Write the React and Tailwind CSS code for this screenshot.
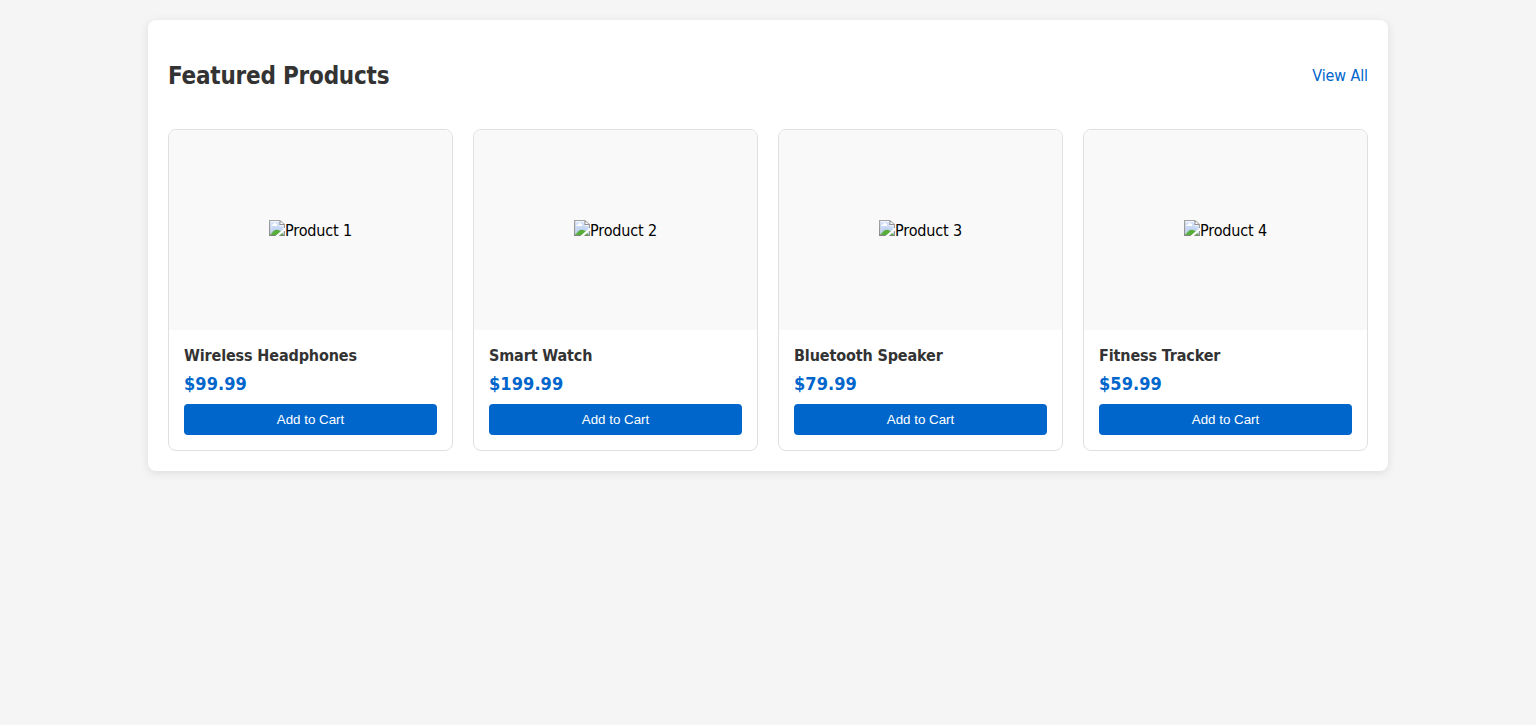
const products = [
  { id: 1, name: "Wireless Headphones", price: "$99.99" },
  { id: 2, name: "Smart Watch", price: "$199.99" },
  { id: 3, name: "Bluetooth Speaker", price: "$79.99" },
  { id: 4, name: "Fitness Tracker", price: "$59.99" },
];

function ProductCard({ product }) {
  return (
    <div className="overflow-hidden rounded-lg border border-[#e0e0e0]">
      <div className="flex h-[200px] items-center justify-center bg-[#f9f9f9]">
        <img src="missing.jpg" alt={`Product ${product.id}`} className="max-h-full max-w-full leading-[21px] tracking-[-0.14px] text-black" />
      </div>
      <div className="p-[15px]">
        <h3 className="mb-1.5 text-base leading-[22px] font-bold tracking-[-0.13px] text-[#333]">{product.name}</h3>
        <p className="mb-2.5 text-lg leading-[21px] font-bold tracking-[0.08px] text-[#0066cc]">{product.price}</p>
        <button className="block h-[31px] w-full rounded bg-[#0066cc] font-['Liberation_Sans',Arial,sans-serif] text-[13.333px] leading-[15px] text-white">
          Add to Cart
        </button>
      </div>
    </div>
  );
}

export default function App() {
  return (
    <main className="min-h-screen bg-[#f5f5f5] p-5 font-[Tahoma,'DejaVu_Sans_Condensed',sans-serif]">
      <section className="mx-auto w-[1240px] rounded-lg bg-white p-5 shadow-[0_2px_10px_rgba(0,0,0,0.1)]">
        <header className="mb-5 flex h-[69px] items-center justify-between pt-0.5">
          <h2 className="text-2xl font-bold tracking-[-0.22px] text-[#333]">Featured Products</h2>
          <a href="#" className="text-base tracking-[-0.1px] text-[#0066cc]">View All</a>
        </header>
        <div className="grid grid-cols-4 gap-5">
          {products.map((product) => <ProductCard key={product.id} product={product} />)}
        </div>
      </section>
    </main>
  );
}
